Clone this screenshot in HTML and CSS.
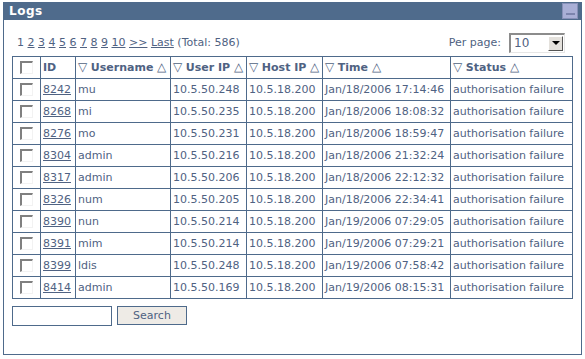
FILE: index.html
```html
<!DOCTYPE html>
<html lang="en">
  <head>
    <meta charset="UTF-8" />
    <title>Logs</title>
    <link rel="stylesheet" href="styles.css">
  </head>

  <body>
    <div class="panel">
      <div class="panel-title">
        <span>Logs</span>
        <span class="minimize"><span class="minimize-bar"></span></span>
      </div>
      <div class="panel-body">
        <div class="toolbar">
          <div class="pager">
            1 <a href="#">2</a> <a href="#">3</a> <a href="#">4</a> <a href="#">5</a>
            <a href="#">6</a> <a href="#">7</a> <a href="#">8</a> <a href="#">9</a>
            <a href="#">10</a> <a href="#">&gt;&gt;</a> <a href="#">Last</a> (Total: 586)
          </div>
          <div class="per-page">
            Per page:
            <div class="select">
              <span class="select-value">10</span>
              <span class="select-button"><span class="arrow"></span></span>
            </div>
          </div>
        </div>

        <table class="logs">
          <thead>
            <tr>
              <th class="col-check"><span class="checkbox"></span></th>
              <th class="col-id">ID</th>
              <th class="col-user"><span class="sort">&#9661;</span> Username <span class="sort">&#9651;</span></th>
              <th class="col-uip"><span class="sort">&#9661;</span> User IP <span class="sort">&#9651;</span></th>
              <th class="col-hip"><span class="sort">&#9661;</span> Host IP <span class="sort">&#9651;</span></th>
              <th class="col-time"><span class="sort">&#9661;</span> Time <span class="sort">&#9651;</span></th>
              <th class="col-status"><span class="sort">&#9661;</span> Status <span class="sort">&#9651;</span></th>
            </tr>
          </thead>
          <tbody>
            <tr>
              <td class="col-check"><span class="checkbox"></span></td>
              <td><a href="#">8242</a></td><td>mu</td><td>10.5.50.248</td><td>10.5.18.200</td>
              <td>Jan/18/2006 17:14:46</td><td>authorisation failure</td>
            </tr>
            <tr>
              <td class="col-check"><span class="checkbox"></span></td>
              <td><a href="#">8268</a></td><td>mi</td><td>10.5.50.235</td><td>10.5.18.200</td>
              <td>Jan/18/2006 18:08:32</td><td>authorisation failure</td>
            </tr>
            <tr>
              <td class="col-check"><span class="checkbox"></span></td>
              <td><a href="#">8276</a></td><td>mo</td><td>10.5.50.231</td><td>10.5.18.200</td>
              <td>Jan/18/2006 18:59:47</td><td>authorisation failure</td>
            </tr>
            <tr>
              <td class="col-check"><span class="checkbox"></span></td>
              <td><a href="#">8304</a></td><td>admin</td><td>10.5.50.216</td><td>10.5.18.200</td>
              <td>Jan/18/2006 21:32:24</td><td>authorisation failure</td>
            </tr>
            <tr>
              <td class="col-check"><span class="checkbox"></span></td>
              <td><a href="#">8317</a></td><td>admin</td><td>10.5.50.206</td><td>10.5.18.200</td>
              <td>Jan/18/2006 22:12:32</td><td>authorisation failure</td>
            </tr>
            <tr>
              <td class="col-check"><span class="checkbox"></span></td>
              <td><a href="#">8326</a></td><td>num</td><td>10.5.50.205</td><td>10.5.18.200</td>
              <td>Jan/18/2006 22:34:41</td><td>authorisation failure</td>
            </tr>
            <tr>
              <td class="col-check"><span class="checkbox"></span></td>
              <td><a href="#">8390</a></td><td>nun</td><td>10.5.50.214</td><td>10.5.18.200</td>
              <td>Jan/19/2006 07:29:05</td><td>authorisation failure</td>
            </tr>
            <tr>
              <td class="col-check"><span class="checkbox"></span></td>
              <td><a href="#">8391</a></td><td>mim</td><td>10.5.50.214</td><td>10.5.18.200</td>
              <td>Jan/19/2006 07:29:21</td><td>authorisation failure</td>
            </tr>
            <tr>
              <td class="col-check"><span class="checkbox"></span></td>
              <td><a href="#">8399</a></td><td>ldis</td><td>10.5.50.248</td><td>10.5.18.200</td>
              <td>Jan/19/2006 07:58:42</td><td>authorisation failure</td>
            </tr>
            <tr>
              <td class="col-check"><span class="checkbox"></span></td>
              <td><a href="#">8414</a></td><td>admin</td><td>10.5.50.169</td><td>10.5.18.200</td>
              <td>Jan/19/2006 08:15:31</td><td>authorisation failure</td>
            </tr>
          </tbody>
        </table>

        <div class="search">
          <input type="text" class="search-input" />
          <button class="search-button">Search</button>
        </div>
      </div>
    </div>
  </body>
</html>
```

FILE: styles.css
```css
* {
  margin: 0;
  padding: 0;
  box-sizing: border-box;
}

body {
  font-family: "DejaVu Sans", sans-serif;
  font-size: 11px;
  color: #4f6282;
  background-color: #fff;
  padding: 2px 3px;
}

a {
  color: #4f6282;
}

.panel {
  width: 579px;
  height: 353px;
  border: 1px solid #4e6a8b;
  border-top: none;
}

.panel-title {
  display: flex;
  justify-content: space-between;
  align-items: center;
  height: 18px;
  background-color: #4f6b8c;
  color: #fff;
  font-weight: bold;
  font-size: 12px;
  padding-left: 5px;
  padding-right: 3px;
  letter-spacing: 0.5px;
}

.minimize {
  display: flex;
  align-items: flex-end;
  justify-content: center;
  width: 16px;
  height: 16px;
  background-color: #a9afd6;
  border: 1px solid #8690b8;
  padding-bottom: 3px;
}

.minimize-bar {
  width: 9px;
  height: 2px;
  background-color: #7c84ad;
}

.panel-body {
  padding: 9px 8px 0 8px;
}

.toolbar {
  display: flex;
  justify-content: space-between;
  align-items: center;
  height: 27px;
  padding-left: 5px;
  padding-right: 8px;
}

.pager a {
  color: #4f6282;
}

.per-page {
  display: flex;
  align-items: center;
  gap: 8px;
}

.select {
  display: flex;
  align-items: center;
  width: 56px;
  height: 20px;
  border-top: 2px solid #8c8c8c;
  border-left: 2px solid #8c8c8c;
  border-bottom: 1px solid #e6e6e6;
  border-right: 1px solid #e6e6e6;
  background-color: #fff;
  padding-left: 3px;
  padding-right: 1px;
}

.select-value {
  flex: 1;
  font-size: 12px;
}

.select-button {
  display: flex;
  align-items: center;
  justify-content: center;
  width: 15px;
  height: 15px;
  background-color: #e4e1dc;
  border-right: 1px solid #555;
  border-bottom: 1px solid #555;
  border-top: 1px solid #fff;
  border-left: 1px solid #fff;
}

.arrow {
  width: 0;
  height: 0;
  border-left: 4px solid transparent;
  border-right: 4px solid transparent;
  border-top: 4px solid #000;
}

.logs {
  border-collapse: collapse;
  width: 561px;
}

.logs th,
.logs td {
  border: 1px solid #4e6a8b;
  height: 22px;
  padding: 0 2px;
  text-align: left;
  white-space: nowrap;
}

.logs th {
  height: 22px;
  font-weight: bold;
}

.sort {
  font-family: "Liberation Sans", sans-serif;
  font-weight: normal;
  font-size: 12px;
  line-height: 1;
}

.logs .col-check {
  width: 28px;
  text-align: center;
}

.col-id {
  width: 35px;
}

.col-user {
  width: 95px;
}

.col-uip {
  width: 76px;
}

.col-hip {
  width: 76px;
}

.col-time {
  width: 128px;
}

.checkbox {
  display: inline-block;
  width: 13px;
  height: 13px;
  vertical-align: middle;
  border-top: 2px solid #808080;
  border-left: 2px solid #808080;
  border-bottom: 1px solid #f2f2f2;
  border-right: 1px solid #f2f2f2;
  background-color: #fff;
}

.search {
  display: flex;
  gap: 5px;
  margin-top: 7px;
}

.search-input {
  width: 100px;
  height: 20px;
  border: 1px solid #4e6a8b;
  font-family: inherit;
  font-size: 11px;
}

.search-button {
  width: 70px;
  height: 19px;
  border: 1px solid #4e6a8b;
  background-color: #eeebe6;
  color: #4f6282;
  font-family: inherit;
  font-size: 11px;
}
```
